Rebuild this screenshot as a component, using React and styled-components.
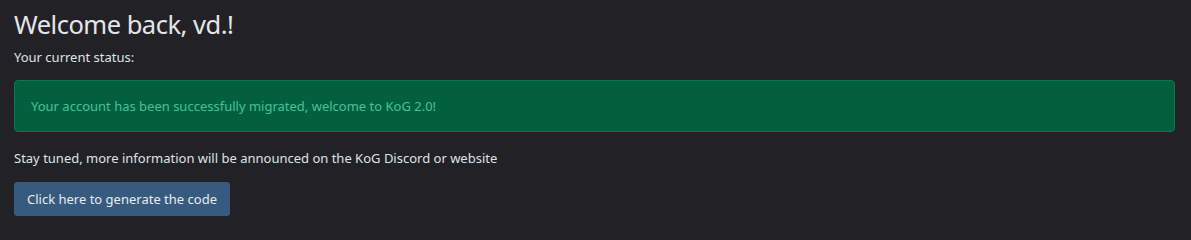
import React from "react";
import styled, { createGlobalStyle } from "styled-components";

const Global = createGlobalStyle`
  html, body {
    margin: 0;
    background: #222226;
  }
  body {
    font-family: "Noto Sans", "Open Sans", sans-serif;
    color: #dee2e6;
  }
`;

const Page = styled.div`
  padding: 6px 16px 24px 14px;
  display: flex;
  flex-direction: column;
  align-items: flex-start;
`;

const Title = styled.h3`
  margin: 0;
  font-size: 25.5px;
  font-weight: 400;
  letter-spacing: -0.5px;
  line-height: 36px;
  color: #e4e6ea;
`;

const Text = styled.p`
  margin: ${(p) => p.$margin || "0"};
  font-size: 13px;
  line-height: 21px;
  color: #dee2e6;
`;

const Alert = styled.div`
  align-self: stretch;
  margin: 12px 0 0;
  padding: 15px 16px;
  height: 52px;
  box-sizing: border-box;
  background: #02603f;
  border: 1px solid #0d7750;
  border-radius: 4px;
  color: #45c096;
  font-size: 13px;
  line-height: 21px;
`;

const Button = styled.button`
  margin-top: 13px;
  padding: 6px 12px;
  height: 34px;
  background: #375a7f;
  border: 1px solid #375a7f;
  border-radius: 3px;
  color: #e8ecf0;
  font-family: inherit;
  font-size: 13px;
  line-height: 20px;
  cursor: pointer;
`;

export default function App() {
  return (
    <>
      <Global />
      <Page>
        <Title>Welcome back, vd.!</Title>
        <Text $margin="5px 0 0">Your current status:</Text>
        <Alert>Your account has been successfully migrated, welcome to KoG 2.0!</Alert>
        <Text $margin="16px 0 0">
          Stay tuned, more information will be announced on the KoG Discord or website
        </Text>
        <Button>Click here to generate the code</Button>
      </Page>
    </>
  );
}
